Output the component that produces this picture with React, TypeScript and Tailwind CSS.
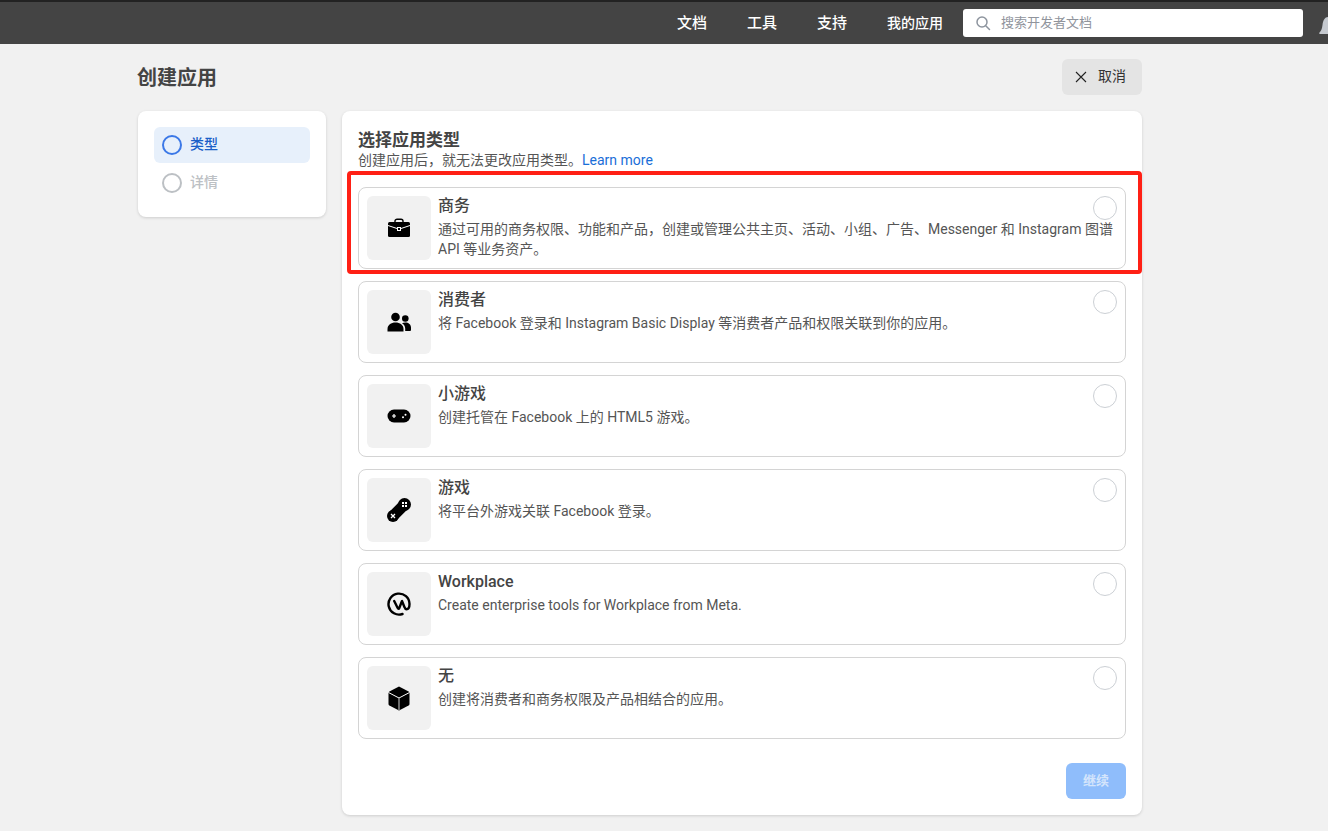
import React from "react";

const Briefcase = () => (
  <svg width="24" height="20" viewBox="0 0 24 20" fill="none">
    <path d="M8 4.500V3C8 2 9 1.200 10 1.200h4c1 0 2 .8 2 1.800v1.500" stroke="#000" strokeWidth="1.400" />
    <rect x="1" y="4" width="22" height="15" rx="1.500" fill="#000" />
    <path d="M1 7.500l9 3M23 7.500l-9 3" stroke="#fff" strokeWidth="1" />
    <rect x="10" y="9" width="4" height="4" fill="#fff" />
    <rect x="11" y="10" width="2" height="2" fill="#000" />
  </svg>
);
const People = () => (
  <svg width="24" height="20" viewBox="0 0 24 20" fill="#000">
    <circle cx="8.500" cy="5" r="4.300" />
    <path d="M0.500 19.500v-2.500C.5 13 4 10.500 8.500 10.500S16.500 13 16.500 17v2.500z" />
    <circle cx="18.300" cy="6.500" r="3.300" />
    <path d="M15 11.300c1-.5 2.100-.8 3.300-.8 3.200 0 5.700 2 5.700 5v2.500a1 1 0 0 1-1 1h-4.800v-2.500c0-2-1.100-3.900-3.200-5.200z" />
  </svg>
);
const Pad = () => (
  <svg width="24" height="14" viewBox="0 0 24 14">
    <rect x="0.500" y="0.500" width="23" height="13" rx="6.500" fill="#000" />
    <path d="M5 7h4M7 5v4" stroke="#fff" strokeWidth="1.200" />
    <circle cx="16" cy="8.300" r="1" fill="#fff" />
    <circle cx="18.500" cy="5.700" r="1" fill="#fff" />
  </svg>
);
const Pad2 = () => (
  <svg width="24" height="24" viewBox="0 0 24 24">
    <circle cx="6" cy="18" r="6" fill="#000" />
    <circle cx="17.500" cy="6.500" r="6.500" fill="#000" />
    <path d="M6 18L17.500 6.500" stroke="#000" strokeWidth="11" />
    <path d="M4 16l4 4M8 16l-4 4" stroke="#fff" strokeWidth="1.300" />
    <rect x="15" y="4" width="2" height="2" fill="#fff" />
    <rect x="18" y="4" width="2" height="2" fill="#fff" />
    <rect x="15" y="7" width="2" height="2" fill="#fff" />
    <rect x="18" y="7" width="2" height="2" fill="#fff" />
  </svg>
);
const Work = () => (
  <svg width="24" height="24" viewBox="0 0 24 24" fill="none" stroke="#000" strokeWidth="2.400" strokeLinecap="round" strokeLinejoin="round">
    <path d="M15.500 22A10.500 10.500 0 1 1 22.500 12c0 2.500-.8 5.200-3 5.200-1 0-1.600-.7-2-2L15 9l-2.800 7.200c-.3.800-1.100.8-1.400 0L7.200 9" />
  </svg>
);
const Box = () => (
  <svg width="24" height="25" viewBox="0 0 24 25">
    <path d="M12 .5L21.600 5.500Q22.500 6 22.500 7V18Q22.500 19 21.600 19.500L12 24.500 2.400 19.500Q1.500 19 1.500 18V7Q1.500 6 2.400 5.500z" fill="#000" />
    <path d="M1.500 6.500L12 12l10.500-5.500" stroke="#fff" strokeWidth="1" fill="none" />
    <path d="M12 12v12.500" stroke="#999" strokeWidth="1.400" />
  </svg>
);

const rows: { title: string; desc: string; icon: React.ReactNode }[] = [
  {
    title: "商务",
    desc: "通过可用的商务权限、功能和产品，创建或管理公共主页、活动、小组、广告、Messenger 和 Instagram 图谱 API 等业务资产。",
    icon: <Briefcase />,
  },
  { title: "消费者", desc: "将 Facebook 登录和 Instagram Basic Display 等消费者产品和权限关联到你的应用。", icon: <People /> },
  { title: "小游戏", desc: "创建托管在 Facebook 上的 HTML5 游戏。", icon: <Pad /> },
  { title: "游戏", desc: "将平台外游戏关联 Facebook 登录。", icon: <Pad2 /> },
  { title: "Workplace", desc: "Create enterprise tools for Workplace from Meta.", icon: <Work /> },
  { title: "无", desc: "创建将消费者和商务权限及产品相结合的应用。", icon: <Box /> },
];

export default function App() {
  return (
    <div
      className="relative h-[831px] w-[1328px] overflow-hidden bg-[#f1f1f1] text-[#444950]"
      style={{ fontFamily: 'Roboto, "Noto Sans CJK SC", sans-serif' }}
    >
      <header className="flex h-[44px] items-center justify-end overflow-hidden border-t-2 border-[#222] bg-[#444]">
        <nav className="flex items-center text-[15px] font-medium text-white">
          <span className="mr-[40px]">文档</span>
          <span className="mr-[40px]">工具</span>
          <span className="mr-[40px]">支持</span>
          <span className="mr-[20px] text-[14px]">我的应用</span>
        </nav>
        <div className="flex h-[28px] w-[340px] items-center rounded-[3px] bg-white pl-[12px]">
          <svg width="16" height="16" viewBox="0 0 16 16" fill="none" stroke="#8d949e" strokeWidth="1.500">
            <circle cx="7" cy="7" r="5" />
            <path d="M11 11l3.500 3.500" strokeLinecap="round" />
          </svg>
          <span className="ml-[10px] text-[13px] text-[#90949c]">搜索开发者文档</span>
        </div>
        <svg className="ml-[16px] mt-[6px] shrink-0" width="9" height="18" viewBox="0 0 9 18" fill="#c5c9cf">
          <path d="M9 0C6 0 4 3 3.500 8 3 12 2 14 .5 15.500 0 16 0 17 1 17h8z" />
        </svg>
      </header>

      <main className="ml-[137px] w-[1005px]">
        <div className="flex h-[67px] items-center justify-between">
          <h1 className="text-[20px] font-bold text-[#444]">创建应用</h1>
          <button className="mb-[2px] flex h-[36px] w-[80px] items-center gap-[11px] rounded-[6px] bg-[#e4e4e4] pl-[13px] text-[14px] text-[#333]">
            <svg width="12" height="12" viewBox="0 0 12 12" stroke="#222" strokeWidth="1.100" fill="none">
              <path d="M1 1l10 10M11 1L1 11" />
            </svg>
            取消
          </button>
        </div>

        <div className="flex items-start gap-[16px]">
          <aside className="ml-[1px] h-[106px] w-[188px] rounded-[8px] bg-white p-[16px] shadow-[0_1px_3px_rgba(0,0,0,0.15)]">
            <div className="flex h-[36px] items-center rounded-[6px] bg-[#e7f0fb] pl-[8px]">
              <span className="h-[20px] w-[20px] rounded-full border-2 border-[#3b78e7]" />
              <span className="mb-[2px] ml-[8px] text-[14px] font-medium text-[#1a5fc8]">类型</span>
            </div>
            <div className="flex h-[2px] flex-col pl-[16px]">
              <span className="-mt-[2px] h-[4px] w-[4px] rounded-full bg-[#ccd0d5]" />
              <span className="mt-[4px] h-[4px] w-[4px] rounded-full bg-[#e9ebee]" />
            </div>
            <div className="flex h-[36px] items-center pl-[8px]">
              <span className="h-[20px] w-[20px] rounded-full border-2 border-[#bcc0c4]" />
              <span className="mb-[2px] ml-[8px] text-[14px] font-medium text-[#bcc0c4]">详情</span>
            </div>
          </aside>

          <section className="h-[704px] w-[800px] rounded-[8px] bg-white px-[16px] pt-[18px] shadow-[0_1px_3px_rgba(0,0,0,0.15)]">
            <h2 className="text-[17px] font-bold leading-[22px] text-[#444]">选择应用类型</h2>
            <p className="text-[14px] leading-[18px] text-[#555]">
              创建应用后，就无法更改应用类型。<span className="text-[#1a6ed8]">Learn more</span>
            </p>
            <div className="mt-[18px] flex flex-col gap-[12px]">
              {rows.map((r) => (
                <div key={r.title} className="relative flex h-[82px] rounded-[8px] border border-[#d4d4d4] bg-white p-[8px] pr-[12px]">
                  <div className="flex h-[64px] w-[64px] shrink-0 items-center justify-center rounded-[6px] bg-[#f1f1f1]">
                    {r.icon}
                  </div>
                  <div className="ml-[7px] min-w-0 flex-1">
                    <div className="text-[16px] font-medium leading-[20px] text-[#444]">{r.title}</div>
                    <div className="mt-[3px] text-[14px] leading-[20px] text-[#555]">{r.desc}</div>
                  </div>
                  <span className="absolute right-[8px] top-[8px] h-[24px] w-[24px] rounded-full border border-[#ccd0d5] bg-white" />
                </div>
              ))}
            </div>
            <div className="mt-[24px] flex justify-end">
              <button className="h-[36px] w-[60px] rounded-[6px] bg-[#8fbdfb] text-[13px] font-bold text-[#d5e5fb]">继续</button>
            </div>
          </section>
        </div>
      </main>

      <div className="pointer-events-none absolute left-[347px] top-[171px] h-[103px] w-[795px] rounded-[4px] border-[4px] border-[#ff2015]" />
    </div>
  );
}
